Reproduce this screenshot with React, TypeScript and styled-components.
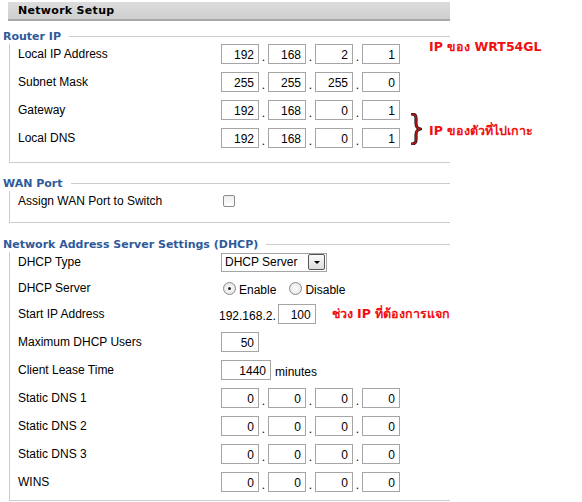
import React from "react";
import styled, { createGlobalStyle } from "styled-components";

const Global = createGlobalStyle`
  body { margin: 0; background: #fff; font-family: "Liberation Sans", Arial, sans-serif; font-size: 12px; color: #000; }
`;

const Page = styled.div`
  width: 447px;
  padding: 2px 0 0 3px;
  position: relative;
`;

const Header = styled.div`
  margin-left: 5px;
  height: 17px;
  background: linear-gradient(#dcdcdc, #cfcfcf);
  border-bottom: 2px solid #a8a8a8;
  font-family: "DejaVu Sans", Verdana, sans-serif;
  font-weight: bold;
  font-size: 11px;
  letter-spacing: 0.3px;
  display: flex;
  align-items: center;
  padding-left: 10px;
`;

const Section = styled.div<{ $gap: number }>`
  margin-top: ${p => p.$gap}px;
  position: relative;
`;

const Legend = styled.div`
  height: 15px;
  display: flex;
  align-items: center;
  gap: 8px;
  color: #2f5a9a;
  font-family: "DejaVu Sans", Verdana, sans-serif;
  font-weight: bold;
  font-size: 11px;
  white-space: nowrap;
  &::after { content: ""; flex: 1; border-top: 1px solid #ccc; }
`;

const Box = styled.div<{ $pb: number }>`
  margin-left: 6px;
  border-left: 1px solid #ccc;
  border-bottom: 1px solid #ccc;
  padding: 0 0 ${p => p.$pb}px 8px;
`;

const Row = styled.div<{ $h?: number }>`
  height: ${p => p.$h ?? 28}px;
  display: grid;
  grid-template-columns: 203px 1fr;
  align-items: start;
`;

const Label = styled.div`
  padding-top: 3px;
  white-space: nowrap;
`;

const Value = styled.div`
  display: flex;
  align-items: center;
  height: 20px;
  white-space: nowrap;
`;

const Field = styled.div<{ $w?: number }>`
  width: ${p => p.$w ?? 38}px;
  height: 20px;
  box-sizing: border-box;
  border: 1px solid #a5a5a5;
  text-align: right;
  padding: 3px 4px 0 0;
`;

const Dot = styled.span`
  width: 9px;
  text-align: center;
  padding-top: 5px;
`;

const Red = styled.div<{ $x: number; $y: number }>`
  position: absolute;
  left: ${p => p.$x}px;
  top: ${p => p.$y}px;
  color: #f01010;
  font-weight: bold;
  font-size: 12.5px;
  font-family: "DejaVu Sans", sans-serif;
  white-space: nowrap;
`;

const InlineRed = styled.span`
  color: #f01010;
  font-weight: bold;
  font-size: 12.5px;
  font-family: "DejaVu Sans", sans-serif;
  margin-left: 16px;
  white-space: nowrap;
`;

const Check = styled.div`
  width: 10px;
  height: 10px;
  margin-left: 2px;
  border: 1px solid #8a8a8a;
  border-radius: 2px;
  background: linear-gradient(#f0f0f0, #fff);
`;

const Select = styled.div`
  width: 106px;
  height: 19px;
  box-sizing: border-box;
  border: 1px solid #a5a5a5;
  display: flex;
  align-items: center;
  justify-content: space-between;
  padding: 0 1px 0 3px;
`;

const SelBtn = styled.div`
  width: 15px;
  height: 14px;
  border: 1px solid #555;
  border-radius: 2px;
  background: linear-gradient(#fafafa, #ddd);
  display: flex;
  align-items: center;
  justify-content: center;
  &::after { content: ""; border-left: 3px solid transparent; border-right: 3px solid transparent; border-top: 3px solid #000; margin-top: 1px; }
`;

const Radio = styled.div<{ $on?: boolean }>`
  width: 11px;
  height: 11px;
  border-radius: 50%;
  border: 1px solid #8a8a8a;
  background: radial-gradient(#fff, #ddd);
  margin: 0 3px 0 ${p => (p.$on ? 2 : 13)}px;
  display: flex;
  align-items: center;
  justify-content: center;
  &::after { content: ""; width: 3px; height: 3px; border-radius: 50%; background: ${p => (p.$on ? "#222" : "transparent")}; }
`;

const Text = styled.span<{ $ml?: number }>`
  margin-left: ${p => p.$ml ?? 0}px;
  padding-top: 3px;
`;

const Ip = ({ v }: { v: string[] }) => (
  <Value>
    {v.map((x, i) => (
      <React.Fragment key={i}>
        {i > 0 && <Dot>.</Dot>}
        <Field>{x}</Field>
      </React.Fragment>
    ))}
  </Value>
);

export default function App() {
  return (
    <Page>
      <Global />
      <Header>Network Setup</Header>
      <Section $gap={8}>
        <Legend>Router IP</Legend>
        <Box $pb={6}>
          <Row><Label>Local IP Address</Label><Ip v={["192", "168", "2", "1"]} /></Row>
          <Row><Label>Subnet Mask</Label><Ip v={["255", "255", "255", "0"]} /></Row>
          <Row><Label>Gateway</Label><Ip v={["192", "168", "0", "1"]} /></Row>
          <Row><Label>Local DNS</Label><Ip v={["192", "168", "0", "1"]} /></Row>
        </Box>
        <Red $x={426} $y={8}>IP ของ WRT54GL</Red>
        <svg width="14" height="32" viewBox="0 0 14 32" style={{ position: "absolute", left: 405, top: 84 }}>
          <path d="M3 1 C9 1 8 4 8 10 C8 14 9 15 12 16 C9 17 8 18 8 22 C8 28 9 31 3 31" fill="none" stroke="#222" strokeWidth="3.2" />
          <path d="M3 1 C9 1 8 4 8 10 C8 14 9 15 12 16 C9 17 8 18 8 22 C8 28 9 31 3 31" fill="none" stroke="#c01010" strokeWidth="1.4" />
        </svg>
        <Red $x={426} $y={92}>IP ของตัวที่ไปเกาะ</Red>
      </Section>
      <Section $gap={13}>
        <Legend>WAN Port</Legend>
        <Box $pb={3}>
          <Row>
            <Label>Assign WAN Port to Switch</Label>
            <Value><Check /></Value>
          </Row>
        </Box>
      </Section>
      <Section $gap={14}>
        <Legend>Network Address Server Settings (DHCP)</Legend>
        <Box $pb={0}>
          <Row $h={26}>
            <Label>DHCP Type</Label>
            <Value><Select>DHCP Server<SelBtn /></Select></Value>
          </Row>
          <Row $h={26}>
            <Label>DHCP Server</Label>
            <Value><Radio $on /><Text>Enable</Text><Radio /><Text>Disable</Text></Value>
          </Row>
          <Row>
            <Label>Start IP Address</Label>
            <Value style={{ marginLeft: -2 }}>
              <Text>192.168.2.</Text><Field $w={38} style={{ marginLeft: 2 }}>100</Field>
              <InlineRed>ช่วง IP ที่ต้องการแจก</InlineRed>
            </Value>
          </Row>
          <Row><Label>Maximum DHCP Users</Label><Value><Field>50</Field></Value></Row>
          <Row><Label>Client Lease Time</Label><Value><Field $w={50}>1440</Field><Text $ml={4}>minutes</Text></Value></Row>
          <Row><Label>Static DNS 1</Label><Ip v={["0", "0", "0", "0"]} /></Row>
          <Row><Label>Static DNS 2</Label><Ip v={["0", "0", "0", "0"]} /></Row>
          <Row><Label>Static DNS 3</Label><Ip v={["0", "0", "0", "0"]} /></Row>
          <Row><Label>WINS</Label><Ip v={["0", "0", "0", "0"]} /></Row>
        </Box>
      </Section>
    </Page>
  );
}
